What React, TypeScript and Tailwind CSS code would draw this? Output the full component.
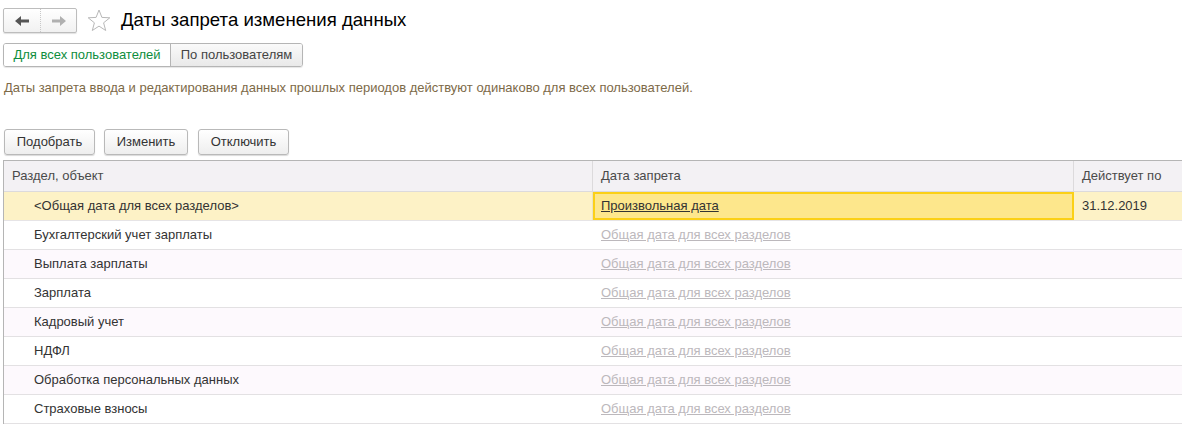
import React from "react";

interface Row {
  name: string;
  even: boolean;
}

const rows: Row[] = [
  { name: "Бухгалтерский учет зарплаты", even: false },
  { name: "Выплата зарплаты", even: true },
  { name: "Зарплата", even: false },
  { name: "Кадровый учет", even: true },
  { name: "НДФЛ", even: false },
  { name: "Обработка персональных данных", even: true },
  { name: "Страховые взносы", even: false },
];

const Star = () => (
  <svg width="24" height="23" viewBox="0 0 24 23">
    <polygon
      points="12,1 14.9,8.4 22.8,8.8 16.6,13.8 18.7,21.5 12,17.1 5.3,21.5 7.4,13.8 1.2,8.8 9.1,8.4"
      fill="none"
      stroke="#b8b8b8"
      strokeWidth="1"
    />
  </svg>
);

const ToolButton: React.FC<{ label: string; className: string }> = ({ label, className }) => (
  <button
    className={`${className} h-[26px] rounded-[3px] border border-[#b9b9b9] bg-gradient-to-b from-white to-[#eeeeee] text-[13px] text-[#333] shadow-[0_1px_1px_rgba(0,0,0,0.15)]`}
  >
    {label}
  </button>
);

export default function App() {
  return (
    <div className="w-[1182px] h-[432px] overflow-hidden bg-white font-['Liberation_Sans',Arial,sans-serif] text-[13px] text-[#333]">
      {/* header */}
      <div className="flex items-center pt-[8px] pl-[3px]">
        <div className="flex h-[25px] w-[74px] rounded-[2px] border border-[#bdbdbd] bg-gradient-to-b from-white to-[#f1f1f1] shadow-[0_1px_1px_rgba(0,0,0,0.12)]">
          <div className="flex w-[37px] items-center justify-center border-r border-dotted border-[#c8c8c8]">
            <svg width="14" height="10" viewBox="0 0 14 10">
              <polygon points="0,5 6,0 6,3.5 14,3.5 14,6.5 6,6.5 6,10" fill="#555" />
            </svg>
          </div>
          <div className="flex flex-1 items-center justify-center">
            <svg width="14" height="10" viewBox="0 0 14 10">
              <polygon points="14,5 8,0 8,3.5 0,3.5 0,6.5 8,6.5 8,10" fill="#b0b0b0" />
            </svg>
          </div>
        </div>
        <div className="ml-[10px] mt-[-1px]">
          <Star />
        </div>
        <div className="ml-[10px] text-[18.6px] text-black leading-none">Даты запрета изменения данных</div>
      </div>

      {/* tabs */}
      <div className="ml-[3px] mt-[10px] flex h-[24px] w-[300px] rounded-[3px] border border-[#b5b5b5] overflow-hidden shadow-[0_1px_1px_rgba(0,0,0,0.1)]">
        <div className="flex w-[166px] items-center justify-center bg-white text-[#0e8d3d]">Для всех пользователей</div>
        <div className="flex flex-1 items-center justify-center border-l border-[#b5b5b5] bg-gradient-to-b from-[#fafafa] to-[#e9e9e9] text-[#444]">
          По пользователям
        </div>
      </div>

      {/* description */}
      <div className="mt-[11px] pl-[4px] text-[13px] text-[#7d6a48]">
        Даты запрета ввода и редактирования данных прошлых периодов действуют одинаково для всех пользователей.
      </div>

      {/* toolbar */}
      <div className="mt-[31px] flex pl-[4px]">
        <ToolButton label="Подобрать" className="w-[91px]" />
        <ToolButton label="Изменить" className="ml-[9px] w-[84px]" />
        <ToolButton label="Отключить" className="ml-[10px] w-[91px]" />
      </div>

      {/* table */}
      <div className="ml-[3px] mt-[5px] border-l border-t border-[#b5b5b5] w-[1190px]">
        <div className="flex h-[31px] border-b border-[#dcdadc] bg-[#f3f1f4] text-[#4a4a4a]">
          <div className="flex w-[589px] items-center pl-[8px] border-r border-[#dcdadc]">Раздел, объект</div>
          <div className="flex w-[481px] items-center pl-[8px] border-r border-[#dcdadc]">Дата запрета</div>
          <div className="flex flex-1 items-center pl-[8px]">Действует по</div>
        </div>

        <div className="flex h-[29px] border-b border-[#e6e4e6] bg-[#fdf2c6]">
          <div className="flex w-[589px] items-center pl-[30px] border-r border-[#ebe3c0]">&lt;Общая дата для всех разделов&gt;</div>
          <div className="flex w-[481px] items-center pl-[6px] border-2 border-[#fbd016] bg-[#fde78c]">
            <span className="underline text-[#333]">Произвольная дата</span>
          </div>
          <div className="flex flex-1 items-center pl-[8px]">31.12.2019</div>
        </div>

        {rows.map((r) => (
          <div
            key={r.name}
            className={`flex h-[29px] border-b border-[#e3e1e3] ${r.even ? "bg-[#fdf9fd]" : "bg-white"}`}
          >
            <div className="flex w-[589px] items-center pl-[30px]">{r.name}</div>
            <div className="flex w-[481px] items-center pl-[8px]">
              <span className="underline text-[#bcb8bc]">Общая дата для всех разделов</span>
            </div>
            <div className="flex-1" />
          </div>
        ))}
      </div>
    </div>
  );
}
